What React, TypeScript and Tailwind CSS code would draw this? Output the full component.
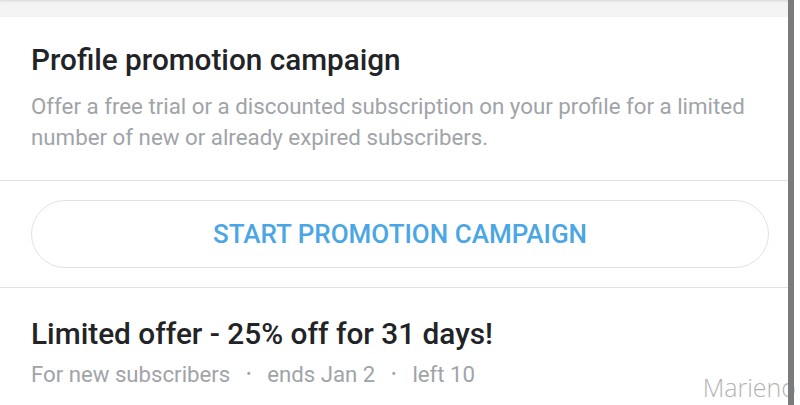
import React from 'react';

const meta = ['For new subscribers', 'ends Jan 2', 'left 10'];

const PromotionPanel: React.FC = () => {
  return (
    <div className="flex-1 min-w-0 flex flex-col">
      <div className="h-[17px] bg-[#f4f4f4] shadow-[inset_0_3px_3px_-2px_rgba(0,0,0,0.12)]" />

      <section className="pl-[31px] pr-[30px] pt-[25px] pb-[27px] border-b border-[#e3e3e3]">
        <h2 className="text-[29.7px] leading-[36px] font-medium text-[#222326]">Profile promotion campaign</h2>
        <p className="mt-[13px] text-[22.3px] leading-[31px] text-[#a0a4a8]">
          Offer a free trial or a discounted subscription on your profile for a limited number of new or already expired
          subscribers.
        </p>
      </section>

      <div className="pl-[31px] pr-[19px] py-[19px] border-b border-[#e3e3e3]">
        <button className="w-full h-[68px] rounded-full border-[1.5px] border-[#e2e2e2] text-[26px] font-medium text-[#4aa6e4]">
          START PROMOTION CAMPAIGN
        </button>
      </div>

      <section className="pl-[31px] pt-[28px]">
        <h3 className="text-[29.8px] leading-[36px] font-medium text-[#222326]">Limited offer - 25% off for 31 days!</h3>
        <div className="mt-[8px] flex items-center text-[22.2px] leading-[28px] text-[#a0a4a8]">
          {meta.map((m, i) => (
            <React.Fragment key={m}>
              {i > 0 && <span className="mx-[16px] text-[15px]">•</span>}
              <span>{m}</span>
            </React.Fragment>
          ))}
        </div>
      </section>
    </div>
  );
};

export default function App() {
  return (
    <div
      className="relative w-[800px] h-[405px] overflow-hidden bg-white flex pr-[12px]"
      style={{ fontFamily: 'Roboto, "Noto Sans", sans-serif' }}
    >
      <PromotionPanel />
      <span
        className="absolute right-[4px] bottom-[5px] text-[25px] leading-none text-[#b4b4b4]"
        style={{ fontFamily: '"Open Sans", sans-serif', fontWeight: 300 }}
      >
        Marieno
      </span>
      {/* scroll indicator, drawn over the watermark */}
      <div className="absolute top-0 bottom-0 right-[6px] w-[6px] bg-[#7b7b7b] z-10" />
    </div>
  );
}
